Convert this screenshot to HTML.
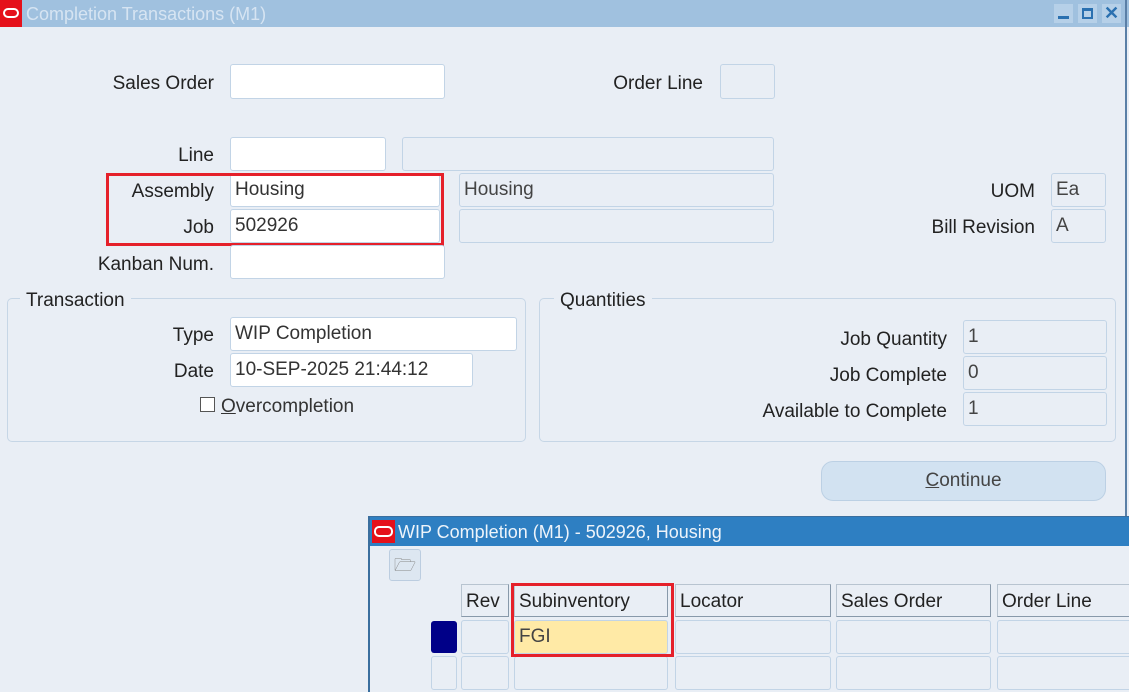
<!DOCTYPE html>
<html><head><style>
*{box-sizing:border-box;margin:0;padding:0}
body{width:1129px;height:692px;overflow:hidden;background:#e9eef5;font-family:"Liberation Sans",sans-serif;font-size:19px;color:#222;position:relative}
.a{position:absolute}
.f{position:absolute;background:#fff;border:1px solid #c2d4e6;border-radius:3px;padding:5px 0 0 4px;color:#333;white-space:nowrap}
.r{position:absolute;background:#e9eef5;border:1px solid #c2d4e6;border-radius:3px;padding:5px 0 0 4px;color:#444}
.l{position:absolute;text-align:right;white-space:nowrap}
.g{position:absolute;border:1px solid #c6d6e6;border-radius:5px}
.red{position:absolute;border:3px solid #e5202a}
.h{position:absolute;background:#e9eef5;border:1px solid #b8c4d0;border-right-color:#8899aa;border-bottom-color:#8899aa;padding:6px 0 0 4px}
.c{position:absolute;background:#e9eef5;border:1px solid #c2d4e6;border-radius:3px}
</style></head><body>
<div class="a" style="left:0;top:0;width:1129px;height:27px;background:#a0c1df"></div>
<div class="a" style="left:0;top:0;width:22px;height:27px;background:#e5101a"></div>
<div class="a" style="left:3px;top:8px;width:16px;height:10px;border:2px solid #fff;border-radius:5px"></div>
<div class="a" style="left:26px;top:4px;color:#d6e4f2;font-size:18px">Completion Transactions (M1)</div>
<div class="a" style="left:1054px;top:4px;width:19px;height:19px;background:#b6d0e8"><div class="a" style="left:4px;top:12px;width:11px;height:3px;background:#2a70b0"></div></div>
<div class="a" style="left:1078px;top:4px;width:19px;height:19px;background:#b6d0e8"><div class="a" style="left:4px;top:4px;width:11px;height:11px;border:2px solid #2a70b0;border-top-width:3px"></div></div>
<div class="a" style="left:1102px;top:4px;width:19px;height:19px;background:#b6d0e8;color:#2a70b0;font-weight:bold;font-size:18px;text-align:center;line-height:19px">✕</div>
<div class="a" style="left:1125px;top:0;width:2px;height:516px;background:#5a7fa6"></div>

<div class="l" style="right:915px;top:73px">Sales Order</div>
<div class="f" style="left:230px;top:64px;width:215px;height:35px"></div>
<div class="l" style="right:426px;top:73px">Order Line</div>
<div class="r" style="left:720px;top:64px;width:55px;height:35px"></div>

<div class="l" style="right:915px;top:145px">Line</div>
<div class="f" style="left:230px;top:137px;width:156px;height:34px"></div>
<div class="r" style="left:402px;top:137px;width:372px;height:34px"></div>
<div class="l" style="right:915px;top:181px">Assembly</div>
<div class="f" style="left:230px;top:173px;width:210px;height:34px">Housing</div>
<div class="r" style="left:459px;top:173px;width:315px;height:34px">Housing</div>
<div class="l" style="right:915px;top:217px">Job</div>
<div class="f" style="left:230px;top:209px;width:210px;height:34px">502926</div>
<div class="r" style="left:459px;top:209px;width:315px;height:34px"></div>
<div class="red" style="left:106px;top:173px;width:338px;height:73px"></div>
<div class="l" style="right:94px;top:181px">UOM</div>
<div class="r" style="left:1051px;top:173px;width:55px;height:34px">Ea</div>
<div class="l" style="right:94px;top:217px">Bill Revision</div>
<div class="r" style="left:1051px;top:209px;width:55px;height:34px">A</div>
<div class="l" style="right:915px;top:254px">Kanban Num.</div>
<div class="f" style="left:230px;top:245px;width:215px;height:34px"></div>

<div class="g" style="left:7px;top:298px;width:519px;height:144px"></div>
<div class="a" style="left:20px;top:290px;padding:0 6px;background:#e9eef5">Transaction</div>
<div class="l" style="right:915px;top:325px">Type</div>
<div class="f" style="left:230px;top:317px;width:287px;height:34px">WIP Completion</div>
<div class="l" style="right:915px;top:361px">Date</div>
<div class="f" style="left:230px;top:353px;width:243px;height:34px">10-SEP-2025 21:44:12</div>
<div class="a" style="left:200px;top:397px;width:15px;height:15px;border:1px solid #555;background:#fff"></div>
<div class="a" style="left:221px;top:396px;color:#333"><u>O</u>vercompletion</div>

<div class="g" style="left:539px;top:298px;width:577px;height:144px"></div>
<div class="a" style="left:554px;top:290px;padding:0 6px;background:#e9eef5">Quantities</div>
<div class="l" style="right:182px;top:329px">Job Quantity</div>
<div class="r" style="left:963px;top:320px;width:144px;height:34px">1</div>
<div class="l" style="right:182px;top:365px">Job Complete</div>
<div class="r" style="left:963px;top:356px;width:144px;height:34px">0</div>
<div class="l" style="right:182px;top:401px">Available to Complete</div>
<div class="r" style="left:963px;top:392px;width:144px;height:34px">1</div>

<div class="a" style="left:821px;top:461px;width:285px;height:40px;border-radius:12px;background:#d2e2f1;border:1px solid #bcd0e4;text-align:center;line-height:38px;color:#444"><u>C</u>ontinue</div>

<div class="a" style="left:368px;top:516px;width:761px;height:176px;background:#e9eef5;border-left:2px solid #3a6e9e;border-top:1px solid #3a6e9e"></div>
<div class="a" style="left:370px;top:517px;width:759px;height:29px;background:#2e7fc2"></div>
<div class="a" style="left:372px;top:520px;width:23px;height:23px;background:#e5101a"></div>
<div class="a" style="left:374px;top:526px;width:19px;height:11px;border:2px solid #fff;border-radius:5px"></div>
<div class="a" style="left:398px;top:522px;color:#eef4fa;font-size:18px">WIP Completion (M1) - 502926, Housing</div>
<div class="a" style="left:389px;top:549px;width:32px;height:32px;border:1px solid #bccde0;border-radius:3px;background:#dde7f1;color:#888;text-align:center;line-height:30px;font-size:18px">🗁</div>

<div class="h" style="left:461px;top:584px;width:48px;height:33px">Rev</div>
<div class="h" style="left:514px;top:584px;width:154px;height:33px">Subinventory</div>
<div class="h" style="left:675px;top:584px;width:156px;height:33px">Locator</div>
<div class="h" style="left:836px;top:584px;width:155px;height:33px">Sales Order</div>
<div class="h" style="left:997px;top:584px;width:140px;height:33px">Order Line</div>

<div class="a" style="left:431px;top:621px;width:26px;height:32px;background:#000088;border-radius:3px"></div>
<div class="c" style="left:461px;top:620px;width:48px;height:34px"></div>
<div class="c" style="left:514px;top:620px;width:154px;height:34px;background:#ffeaa6;padding:5px 0 0 4px;color:#444">FGI</div>
<div class="c" style="left:675px;top:620px;width:156px;height:34px"></div>
<div class="c" style="left:836px;top:620px;width:155px;height:34px"></div>
<div class="c" style="left:997px;top:620px;width:140px;height:34px"></div>
<div class="c" style="left:431px;top:656px;width:26px;height:34px"></div>
<div class="c" style="left:461px;top:656px;width:48px;height:34px"></div>
<div class="c" style="left:514px;top:656px;width:154px;height:34px"></div>
<div class="c" style="left:675px;top:656px;width:156px;height:34px"></div>
<div class="c" style="left:836px;top:656px;width:155px;height:34px"></div>
<div class="c" style="left:997px;top:656px;width:140px;height:34px"></div>
<div class="red" style="left:511px;top:583px;width:163px;height:74px"></div>
</body></html>
